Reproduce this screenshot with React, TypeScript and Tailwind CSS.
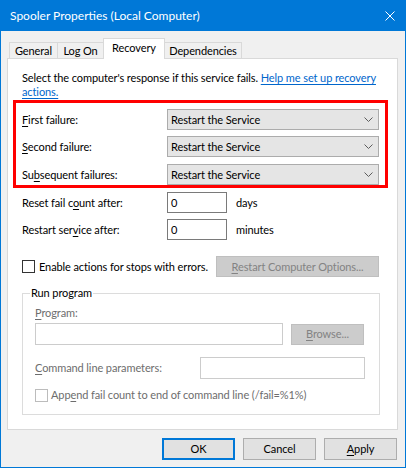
import type { ReactNode } from 'react';

function Dropdown({ value }: { value: string }) {
  return (
    <div className="flex items-center w-[212px] h-[21px] border border-[#acacac] bg-[#e5e5e5] pl-[3px] pr-[5px]">
      <span className="flex-1">{value}</span>
      <svg width="9" height="5" viewBox="0 0 9 5" fill="none">
        <polyline points="0.5,0.5 4.5,4.5 8.5,0.5" stroke="#5c5c5c" strokeWidth="1" />
      </svg>
    </div>
  );
}

function Key({ children }: { children: ReactNode }) {
  return <span className="underline underline-offset-2">{children}</span>;
}

function FailureRow({ label, className = '' }: { label: ReactNode; className?: string }) {
  return (
    <div className={`flex items-center h-[21px] ${className}`}>
      <span className="w-[145px]">{label}</span>
      <Dropdown value="Restart the Service" />
    </div>
  );
}

function NumberRow({ label, unit, className = '' }: { label: ReactNode; unit: string; className?: string }) {
  return (
    <div className={`flex items-center h-[21px] ml-[14px] ${className}`}>
      <span className="w-[145px]">{label}</span>
      <div className="w-[60px] h-[21px] border border-[#7a7a7a] bg-white px-[3px] flex items-center">0</div>
      <span className="ml-[9px]">{unit}</span>
    </div>
  );
}

export default function App() {
  return (
    <div className="w-[406px] h-[468px] bg-[#f0f0f0] border-x border-b border-[#0078d7] font-['Lato',sans-serif] text-[11px] tracking-[-0.1px] leading-[14px] text-black flex flex-col">
      <div className="h-[31px] -mx-px bg-[#0078d7] text-white text-[12px] tracking-normal flex items-center pl-[10px] pr-[11px]">
        <span className="flex-1">Spooler Properties (Local Computer)</span>
        <svg width="10" height="10" viewBox="0 0 10 10" fill="none">
          <path d="M0.5 0.5L9.5 9.5M9.5 0.5L0.5 9.5" stroke="white" strokeWidth="1" />
        </svg>
      </div>

      <div className="mt-[7px] ml-[8px] h-[20px] flex items-end">
        <div className="w-[48px] h-[16px] border-l border-t border-[#d9d9d9] flex items-center justify-center">General</div>
        <div className="w-[46px] h-[16px] border-l border-t border-[#d9d9d9] flex items-center justify-center">Log On</div>
        <div className="relative z-10 w-[62px] h-[21px] -mb-px border-x border-t border-[#d9d9d9] bg-white flex justify-center pt-[2px]">
          Recovery
        </div>
        <div className="w-[77px] h-[16px] border-r border-t border-[#d9d9d9] flex items-center justify-center">Dependencies</div>
      </div>

      <div className="ml-[6px] w-[391px] h-[372px] border border-[#d9d9d9] bg-white flex flex-col">
        <p className="ml-[14px] mt-[12px] whitespace-nowrap">
          Select the computer's response if this service fails.{' '}
          <span className="text-[#0066cc] underline underline-offset-2">
            Help me set up recovery
            <br />
            actions.
          </span>
        </p>

        <div className="ml-[5px] mt-[1px] w-[375px] h-[88px] border-[3px] border-[#ff0000] pl-[6px] pt-[6px]">
          <FailureRow label={<><Key>F</Key>irst failure:</>} />
          <FailureRow className="mt-[6px]" label={<><Key>S</Key>econd failure:</>} />
          <FailureRow className="mt-[7px]" label={<>Su<Key>b</Key>sequent failures:</>} />
        </div>

        <NumberRow className="mt-[4px]" label={<>Reset fail c<Key>o</Key>unt after:</>} unit="days" />
        <NumberRow className="mt-[6px]" label={<>Restart ser<Key>v</Key>ice after:</>} unit="minutes" />

        <div className="mt-[16px] ml-[14px] w-[357px] h-[21px] flex items-center">
          <div className="w-[13px] h-[13px] border border-[#333333] bg-white" />
          <span className="ml-[4px] whitespace-nowrap">Enable actions for stops with errors.</span>
          <div className="ml-auto w-[163px] h-[21px] border border-[#bfbfbf] bg-[#cccccc] text-[#838383] flex items-center justify-center">
            <span><Key>R</Key>estart Computer Options...</span>
          </div>
        </div>

        <div className="relative mt-[16px] ml-[14px] w-[358px] h-[122px] border border-[#dcdcdc] pl-[12px] pt-[12px]">
          <span className="absolute -top-[8px] left-[7px] px-[1px] bg-white">Run program</span>
          <div className="text-[#6d6d6d]"><Key>P</Key>rogram:</div>
          <div className="mt-[3px] flex items-center">
            <div className="w-[248px] h-[22px] border border-[#cccccc] bg-white" />
            <div className="ml-[8px] w-[73px] h-[21px] border border-[#bfbfbf] bg-[#cccccc] text-[#838383] flex items-center justify-center">
              <span><Key>B</Key>rowse...</span>
            </div>
          </div>
          <div className="mt-[12px] h-[22px] flex items-center">
            <span className="w-[165px] text-[#6d6d6d]"><Key>C</Key>ommand line parameters:</span>
            <div className="w-[165px] h-[22px] border border-[#cccccc] bg-white" />
          </div>
          <div className="mt-[9px] flex items-center">
            <div className="w-[13px] h-[13px] border border-[#bcbcbc] bg-white" />
            <span className="ml-[3px] text-[#6d6d6d]">App<Key>e</Key>nd fail count to end of command line (/fail=%1%)</span>
          </div>
        </div>
      </div>

      <div className="mt-[8px] pr-[8px] flex justify-end gap-[8px]">
        <div className="w-[73px] h-[22px] border-2 border-[#0078d7] bg-[#e1e1e1] flex items-center justify-center">OK</div>
        <div className="w-[73px] h-[22px] border border-[#adadad] bg-[#e1e1e1] flex items-center justify-center">Cancel</div>
        <div className="w-[73px] h-[22px] border border-[#adadad] bg-[#e1e1e1] flex items-center justify-center">
          <span><Key>A</Key>pply</span>
        </div>
      </div>
    </div>
  );
}
